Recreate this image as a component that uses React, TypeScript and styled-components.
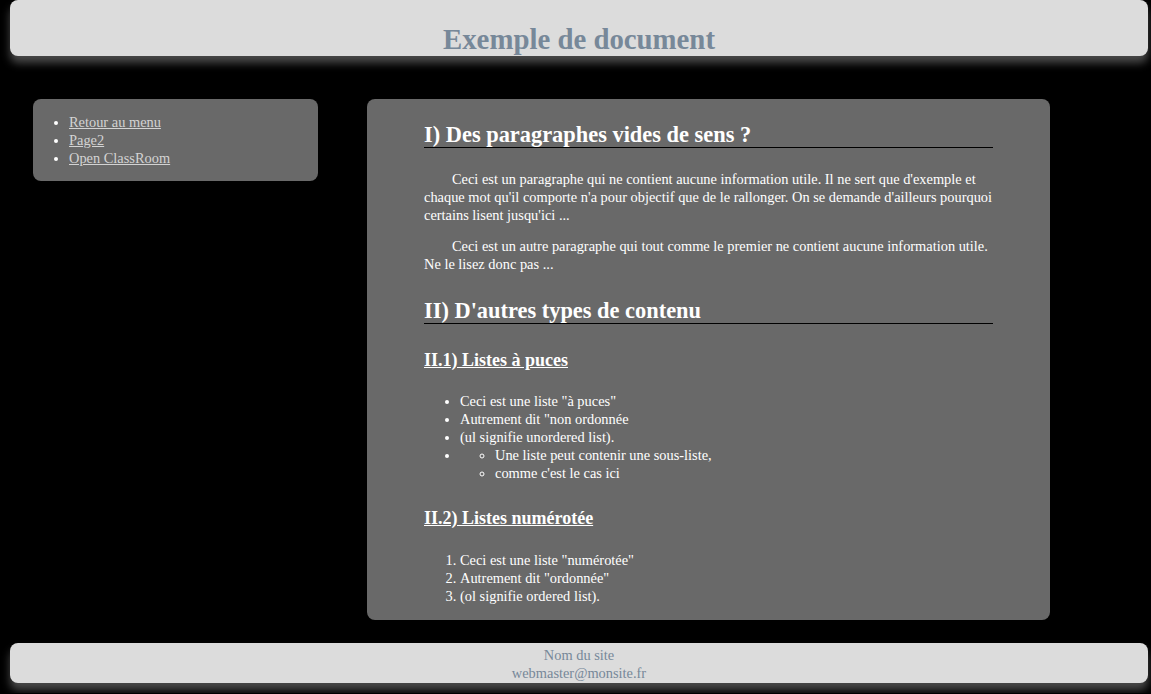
import React from "react";
import styled, { createGlobalStyle } from "styled-components";

const titleColor = "#778899";
const panelColor = "#696969";
const barColor = "#dcdcdc";

const GlobalStyle = createGlobalStyle`
  html, body {
    margin: 0;
    padding: 0;
    background: #000;
  }
  body {
    font-family: "Liberation Serif", "Times New Roman", serif;
    font-size: 14.4px;
    line-height: 18px;
    color: #fff;
  }
`;

const Page = styled.div`
  padding: 0 3px 10px 10px;
`;

const Header = styled.header`
  height: 56px;
  background: ${barColor};
  border-radius: 8px;
  box-shadow: 0 7px 8px #4a4a4a;
  text-align: center;
`;

const Title = styled.h1`
  margin: 0;
  padding-top: 23px;
  font-size: 28.8px;
  line-height: 32px;
  font-weight: bold;
  color: ${titleColor};
`;

const Body = styled.div`
  display: flex;
  align-items: flex-start;
  gap: 49px;
  padding: 43px 0 0 23px;
`;

const Nav = styled.nav`
  width: 285px;
  background: ${panelColor};
  border-radius: 8px;
  padding: 14px 0 14px;
`;

const NavList = styled.ul`
  margin: 0;
  padding-left: 36px;
  list-style: disc;
`;

const NavLink = styled.a`
  color: #d3d3d3;
  text-decoration: underline;
`;

const Section = styled.main`
  width: 683px;
  box-sizing: border-box;
  background: ${panelColor};
  border-radius: 8px;
  padding: 23px 57px 15px;
`;

const H2 = styled.h2<{ $top?: number }>`
  margin: ${(p) => p.$top ?? 0}px 0 0;
  font-size: 22.4px;
  line-height: 25px;
  font-weight: bold;
  border-bottom: 1px solid #000;
`;

const H3 = styled.h3<{ $top: number }>`
  margin: ${(p) => p.$top}px 0 0;
  font-size: 18px;
  line-height: 21px;
  font-weight: bold;
  text-decoration: underline;
`;

const Para = styled.p<{ $top: number }>`
  margin: ${(p) => p.$top}px 0 0;
  text-indent: 28px;
`;

const Bullets = styled.ul<{ $top?: number }>`
  margin: ${(p) => p.$top ?? 0}px 0 0;
  padding-left: 36px;
  list-style: disc;
`;

const SubBullets = styled.ul`
  margin: 0;
  padding-left: 35px;
  list-style: circle;
`;

const Numbers = styled.ol<{ $top: number }>`
  margin: ${(p) => p.$top}px 0 0;
  padding-left: 36px;
`;

const Footer = styled.footer`
  margin-top: 23px;
  height: 40px;
  box-sizing: border-box;
  padding-top: 3px;
  background: ${barColor};
  border-radius: 8px;
  box-shadow: 0 7px 8px #4a4a4a;
  text-align: center;
  color: ${titleColor};
`;

export default function App() {
  return (
    <>
      <GlobalStyle />
      <Page>
        <Header>
          <Title>Exemple de document</Title>
        </Header>
        <Body>
          <Nav>
            <NavList>
              <li><NavLink href="#">Retour au menu</NavLink></li>
              <li><NavLink href="#">Page2</NavLink></li>
              <li><NavLink href="#">Open ClassRoom</NavLink></li>
            </NavList>
          </Nav>
          <Section>
            <H2>I) Des paragraphes vides de sens ?</H2>
            <Para $top={22}>
              Ceci est un paragraphe qui ne contient aucune information utile. Il ne sert que d'exemple et
              chaque mot qu'il comporte n'a pour objectif que de le rallonger. On se demande d'ailleurs pourquoi
              certains lisent jusqu'ici ...
            </Para>
            <Para $top={13}>
              Ceci est un autre paragraphe qui tout comme le premier ne contient aucune information utile.
              Ne le lisez donc pas ...
            </Para>
            <H2 $top={25}>II) D'autres types de contenu</H2>
            <H3 $top={26}>II.1) Listes à puces</H3>
            <Bullets $top={21}>
              <li>Ceci est une liste "à puces"</li>
              <li>Autrement dit "non ordonnée</li>
              <li>(ul signifie unordered list).</li>
              <li>
                <SubBullets>
                  <li>Une liste peut contenir une sous-liste,</li>
                  <li>comme c'est le cas ici</li>
                </SubBullets>
              </li>
            </Bullets>
            <H3 $top={26}>II.2) Listes numérotée</H3>
            <Numbers $top={22}>
              <li>Ceci est une liste "numérotée"</li>
              <li>Autrement dit "ordonnée"</li>
              <li>(ol signifie ordered list).</li>
            </Numbers>
          </Section>
        </Body>
        <Footer>
          Nom du site
          <br />
          webmaster@monsite.fr
        </Footer>
      </Page>
    </>
  );
}
